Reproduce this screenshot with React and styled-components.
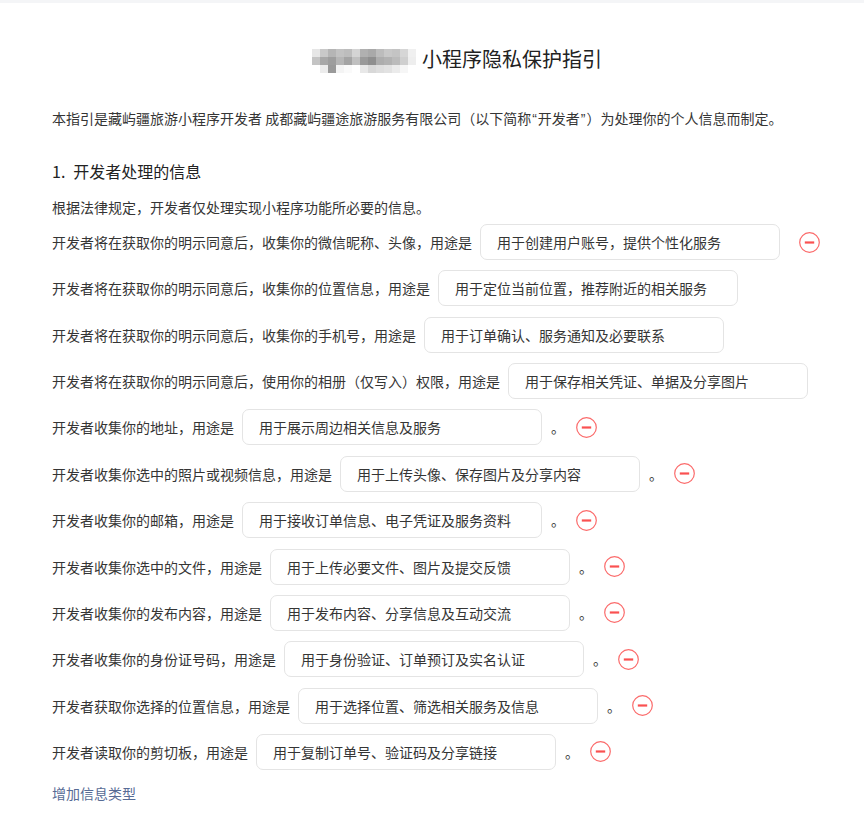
import React from 'react'
import styled, { createGlobalStyle } from 'styled-components'

const GlobalStyle = createGlobalStyle`
  html, body {
    margin: 0;
    padding: 0;
    background: #fff;
  }
  body {
    font-family: "Noto Sans CJK SC", "Noto Sans", sans-serif;
    color: #353535;
    -webkit-font-smoothing: antialiased;
  }
`

const TopBar = styled.div`
  height: 3px;
  background: #f4f5f7;
`

const Page = styled.div`
  padding: 0 52px 20px;
`

const Title = styled.h1`
  margin: 42px 0 0;
  padding-left: 50px;
  display: flex;
  justify-content: center;
  align-items: center;
  gap: 6px;
  font-size: 20px;
  line-height: 28px;
  font-weight: 400;
  color: #222;
`

const Mosaic = styled.div`
  display: grid;
  grid-template-columns: repeat(13, 8px);
  grid-auto-rows: 8px;
  filter: blur(0.6px);
  margin-top: 4px;
`

const Cell = styled.span`
  background: ${p => p.shade};
`

const Intro = styled.p`
  margin: 35px 0 0;
  font-size: 14px;
  line-height: 20px;
  white-space: nowrap;
`

const Quote = styled.span`
  font-family: "Liberation Sans", sans-serif;
  margin: 0 1px;
`

const Heading = styled.h2`
  margin: 30px 0 0;
  font-size: 16px;
  line-height: 24px;
  font-weight: 400;
  color: #222;

  span {
    margin-right: 8px;
  }
`

const Note = styled.p`
  margin: 14px 0 0;
  font-size: 14px;
  line-height: 20px;
`

const List = styled.div`
  margin-top: 7px;
  display: flex;
  flex-direction: column;
  gap: 10.36px;
`

const Row = styled.div`
  display: flex;
  align-items: center;
  height: 36px;
  font-size: 14px;
  white-space: nowrap;
`

const Label = styled.span`
  flex-shrink: 0;
  margin-right: 8px;
`

const Purpose = styled.div`
  box-sizing: border-box;
  flex-shrink: 0;
  width: 300px;
  height: 36px;
  padding: 0 16px;
  display: flex;
  align-items: center;
  border: 1px solid #e4e4e4;
  border-radius: 7px;
  color: #353535;
`

const Period = styled.span`
  flex-shrink: 0;
  margin-left: 9px;
  width: 14px;
`

const RemoveButton = styled.button`
  flex-shrink: 0;
  margin-left: ${p => p.$offset}px;
  padding: 0;
  border: none;
  background: none;
  width: 21px;
  height: 21px;
  display: flex;
  cursor: pointer;
`

const AddLink = styled.a`
  display: inline-block;
  margin-top: 13px;
  font-size: 14px;
  line-height: 20px;
  color: #576b95;
  text-decoration: none;
  cursor: pointer;
`

const shades = [
  '#e6e6e6', '#c9c9c9', '#b5b5b5', '#c2c2c2', '#bdbdbd', '#d4d4d4', '#b0b0b0', '#a9a9a9', '#bcbcbc', '#c8c8c8', '#c4c4c4', '#d6d6d6', '#f0f0f0',
  '#c4c4c4', '#a8a8a8', '#9e9e9e', '#b6b6b6', '#a4a4a4', '#c0c0c0', '#9a9a9a', '#8f8f8f', '#adadad', '#b2b2b2', '#bbbbbb', '#cfcfcf', '#eeeeee',
  '#fff', '#ececec', '#9a9a9a', '#f4f4f4', '#fafafa', '#fff', '#e8e8e8', '#d8d8d8', '#dedede', '#e2e2e2', '#ebebeb', '#f6f6f6', '#fff',
]

const items = [
  { label: '开发者将在获取你的明示同意后，收集你的微信昵称、头像，用途是', value: '用于创建用户账号，提供个性化服务', period: false, remove: true },
  { label: '开发者将在获取你的明示同意后，收集你的位置信息，用途是', value: '用于定位当前位置，推荐附近的相关服务' },
  { label: '开发者将在获取你的明示同意后，收集你的手机号，用途是', value: '用于订单确认、服务通知及必要联系' },
  { label: '开发者将在获取你的明示同意后，使用你的相册（仅写入）权限，用途是', value: '用于保存相关凭证、单据及分享图片' },
  { label: '开发者收集你的地址，用途是', value: '用于展示周边相关信息及服务', period: true, remove: true },
  { label: '开发者收集你选中的照片或视频信息，用途是', value: '用于上传头像、保存图片及分享内容', period: true, remove: true },
  { label: '开发者收集你的邮箱，用途是', value: '用于接收订单信息、电子凭证及服务资料', period: true, remove: true },
  { label: '开发者收集你选中的文件，用途是', value: '用于上传必要文件、图片及提交反馈', period: true, remove: true },
  { label: '开发者收集你的发布内容，用途是', value: '用于发布内容、分享信息及互动交流', period: true, remove: true },
  { label: '开发者收集你的身份证号码，用途是', value: '用于身份验证、订单预订及实名认证', period: true, remove: true },
  { label: '开发者获取你选择的位置信息，用途是', value: '用于选择位置、筛选相关服务及信息', period: true, remove: true },
  { label: '开发者读取你的剪切板，用途是', value: '用于复制订单号、验证码及分享链接', period: true, remove: true },
]

function MinusIcon() {
  return (
    <svg width="21" height="21" viewBox="0 0 21 21">
      <circle cx="10.5" cy="10.5" r="9.8" fill="none" stroke="#fb6b6b" strokeWidth="1.2" />
      <line x1="5.8" y1="10.5" x2="15.2" y2="10.5" stroke="#fa5151" strokeWidth="2.2" />
    </svg>
  )
}

export default function App() {
  return (
    <>
      <GlobalStyle />
      <TopBar />
      <Page>
        <Title>
          <Mosaic>
            {shades.map((shade, i) => <Cell key={i} shade={shade} />)}
          </Mosaic>
          小程序隐私保护指引
        </Title>
        <Intro>
          本指引是藏屿疆旅游小程序开发者 成都藏屿疆途旅游服务有限公司（以下简称<Quote>“</Quote>开发者<Quote>”</Quote>）为处理你的个人信息而制定。
        </Intro>
        <Heading><span>1.</span>开发者处理的信息</Heading>
        <Note>根据法律规定，开发者仅处理实现小程序功能所必要的信息。</Note>
        <List>
          {items.map((item, i) => (
            <Row key={i}>
              <Label>{item.label}</Label>
              <Purpose>{item.value}</Purpose>
              {item.period && <Period>。</Period>}
              {item.remove && (
                <RemoveButton $offset={item.period ? 11 : 19}>
                  <MinusIcon />
                </RemoveButton>
              )}
            </Row>
          ))}
        </List>
        <AddLink>增加信息类型</AddLink>
      </Page>
    </>
  )
}
